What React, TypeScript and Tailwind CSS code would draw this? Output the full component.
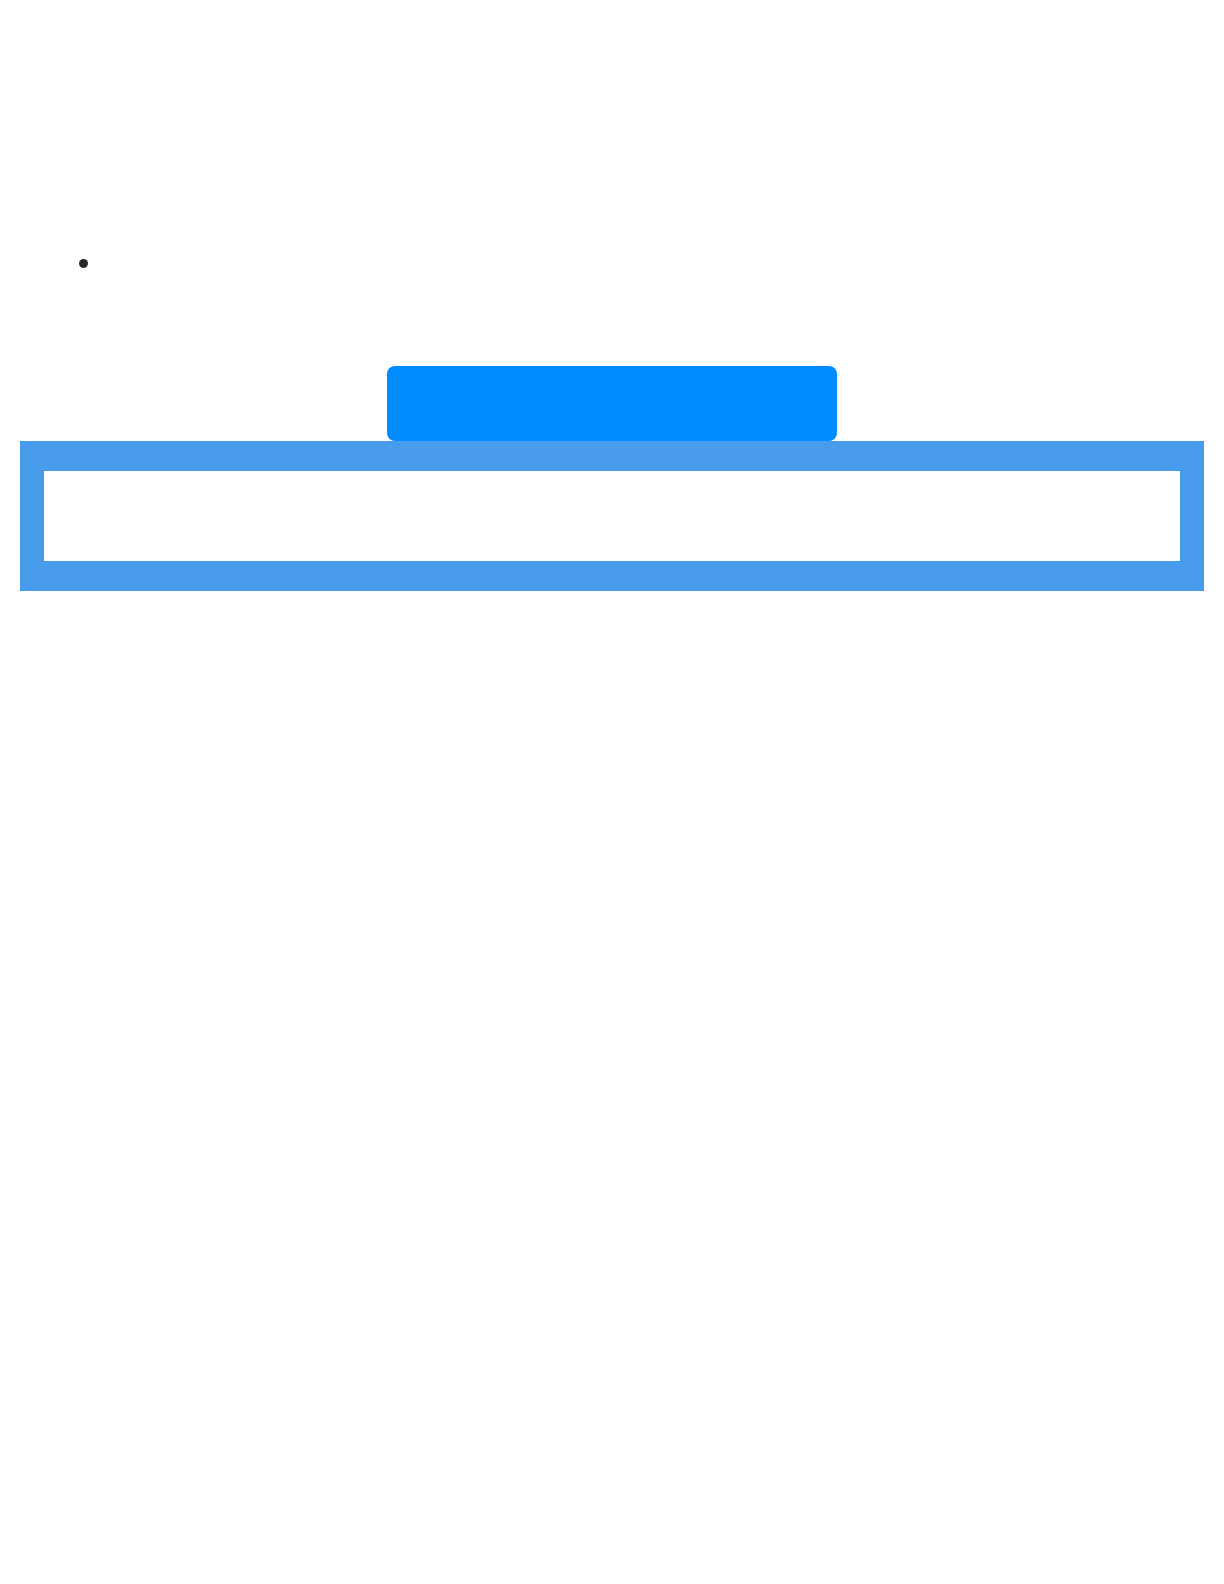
export default function App() {
  return (
    <div className="min-h-screen bg-white font-['Liberation_Sans',Arial,sans-serif] text-[#282828]">
      <main className="flex flex-col px-5">
        <ul className="pt-[258px] pb-[98px] pl-[59px]">
          <li className="flex h-[10px] items-center">
            <span className="size-[9px] rounded-full bg-[#282828]" />
          </li>
        </ul>

        <button
          type="button"
          aria-label="Continue"
          className="h-[75px] w-full max-w-[450px] self-center rounded-lg bg-[#008cff] hover:bg-[#007ee6]"
        />

        <section className="bg-[#499bec] px-6 py-[30px]">
          <div className="min-h-[90px] bg-white" />
        </section>
      </main>
    </div>
  );
}
